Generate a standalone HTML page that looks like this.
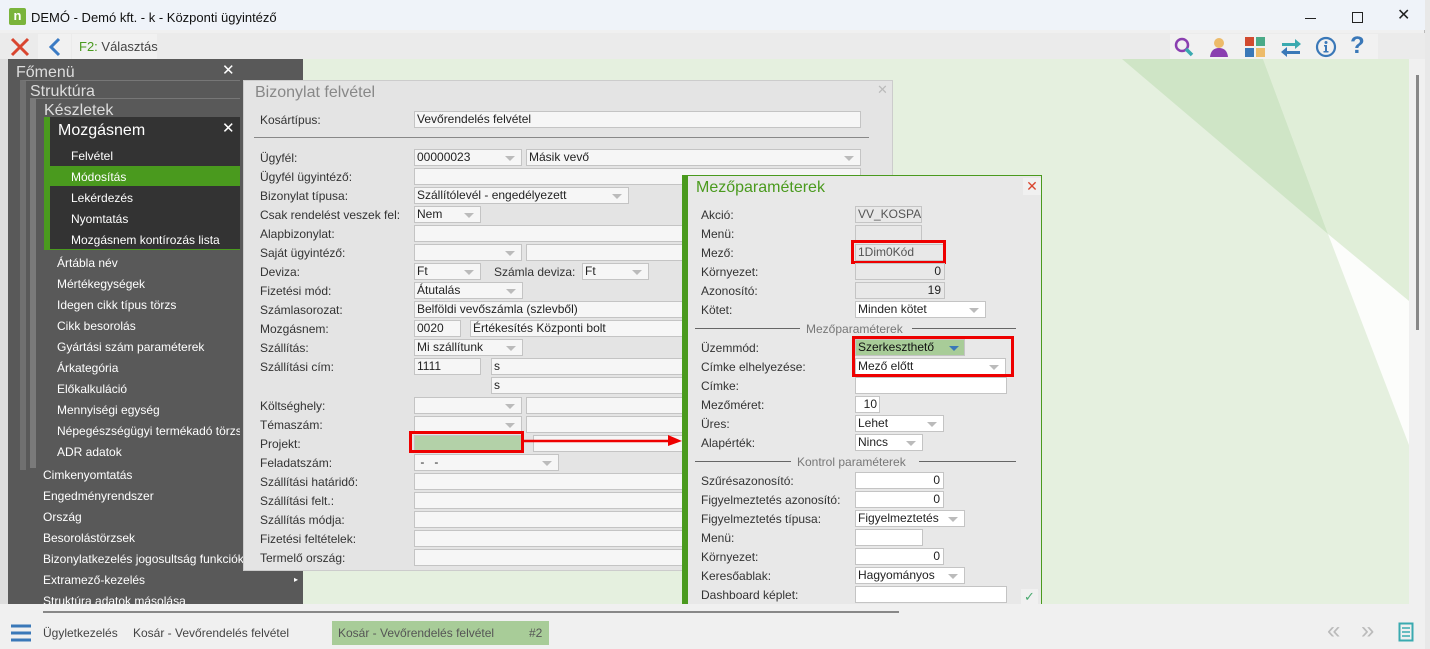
<!DOCTYPE html>
<html><head><meta charset="utf-8"><style>
*{margin:0;padding:0;box-sizing:border-box}
body{width:1430px;height:649px;overflow:hidden;background:#fff;font-family:"Liberation Sans",Arial,sans-serif;font-size:12px;position:relative}
.a{position:absolute}
.lbl{position:absolute;font-size:12px;color:#333;white-space:nowrap;line-height:14px}
.in{position:absolute;height:17px;background:#f6f6f6;border:1px solid #c4c4c4;font-size:12px;line-height:15px;padding-left:2px;color:#222;white-space:nowrap;overflow:hidden}
.dd::after{content:"";position:absolute;right:6px;top:6px;border-left:5px solid transparent;border-right:5px solid transparent;border-top:5px solid #bbb}
.mi{position:absolute;color:#fff;font-size:12px;white-space:nowrap;line-height:14px}
</style></head><body>
<div class="a" style="left:0;top:0;width:1425px;height:649px;background:#f0f0f0;border-right:1px solid #bbb"></div>
<div class="a" style="left:1425px;top:0;width:5px;height:649px;background:#e8e8e8"></div>
<div class="a" style="left:0;top:0;width:1425px;height:30px;background:#eff3f9"></div>
<div class="a" style="left:9px;top:8px;width:17px;height:17px;background:#7ab43c;border-radius:2px;color:#fff;font-weight:bold;font-size:13px;line-height:16px;text-align:center">n</div>
<div class="a" style="left:31px;top:10px;font-size:13px;color:#111">DEMÓ - Demó kft. - k - Központi ügyintéző</div>
<div class="a" style="left:1305px;top:18px;width:11px;height:1px;background:#222"></div>
<div class="a" style="left:1352px;top:12px;width:11px;height:11px;border:1px solid #222"></div>
<div class="a" style="left:1397px;top:5px;font-size:16px;color:#222">✕</div>
<div class="a" style="left:0;top:33px;width:1425px;height:26px;background:#ebebeb"></div>
<svg class="a" style="left:10px;top:37px" width="20" height="20"><path d="M2 2L18 18M18 2L2 18" stroke="#d9452f" stroke-width="3"/></svg>
<div class="a" style="left:38px;top:34px;width:33px;height:25px;background:#f1f1f1"></div>
<svg class="a" style="left:48px;top:37px" width="14" height="20"><path d="M11 2L3 10L11 18" stroke="#3b7bc4" stroke-width="3" fill="none"/></svg>
<div class="a" style="left:72px;top:34px;width:85px;height:25px;background:#f1f1f1"></div>
<div class="a" style="left:79px;top:39px;font-size:13px;color:#444"><span style="color:#4a9a1e">F2:</span> Választás</div>
<div class="a" style="left:1170px;top:34px;width:208px;height:25px;background:#f1f1f1"></div>
<svg class="a" style="left:1173px;top:36px" width="24" height="22"><circle cx="9" cy="9" r="6" stroke="#8a3fb0" stroke-width="2.5" fill="none"/><path d="M13 13L19 19" stroke="#3aaab0" stroke-width="3.5"/></svg>
<svg class="a" style="left:1208px;top:36px" width="22" height="22"><circle cx="11" cy="7" r="5" fill="#edbb6a"/><path d="M2 21Q3 12 11 12Q19 12 20 21Z" fill="#8a3fb0"/></svg>
<svg class="a" style="left:1244px;top:36px" width="22" height="22"><rect x="1" y="1" width="9" height="9" fill="#d14a2f"/><rect x="12" y="1" width="9" height="9" fill="#4aaa88"/><rect x="1" y="12" width="9" height="9" fill="#3a78b8"/><rect x="12" y="12" width="9" height="9" fill="#edbb6a"/></svg>
<svg class="a" style="left:1279px;top:36px" width="24" height="22"><path d="M3 7H16V3L22 8L16 13V10H3Z" fill="#3aaab0"/><path d="M21 15H8V11L2 16L8 21V18H21Z" fill="#3a78b8"/></svg>
<svg class="a" style="left:1315px;top:36px" width="22" height="22"><circle cx="11" cy="11" r="9" stroke="#3a78b8" stroke-width="2.2" fill="none"/><circle cx="11" cy="6.5" r="1.5" fill="#3a78b8"/><path d="M9 9H12V15H13.5V16.5H8.5V15H10V10.5H9Z" fill="#3a78b8"/></svg>
<div class="a" style="left:1350px;top:32px;font-size:24px;font-weight:bold;color:#3a78b8">?</div>
<div class="a" style="left:303px;top:59px;width:1106px;height:546px;background:#e5f0df"></div>
<svg class="a" style="left:303px;top:59px" width="1106" height="546"><polygon points="819,0 960,0 1025,175" fill="#cfe5c6"/><polygon points="960,0 1106,0 1106,242 1025,175" fill="#e0eed8"/><polygon points="1025,175 1106,242 1106,386" fill="#fcfdfb"/></svg>
<div class="a" style="left:1409px;top:59px;width:16px;height:546px;background:#f0f0f0"></div>
<div class="a" style="left:1416px;top:75px;width:3px;height:255px;background:#888"></div>
<div class="a" style="left:0;top:59px;width:8px;height:546px;background:#ddd"></div>
<div class="a" style="left:8px;top:59px;width:295px;height:546px;background:#595959"></div>
<div class="a" style="left:16px;top:64px;font-size:16px;color:#ddd">Főmenü</div>
<div class="a" style="left:222px;top:61px;font-size:15px;color:#fff">✕</div>
<div class="a" style="left:20px;top:80px;width:220px;height:390px;background:#595959;border-left:6px solid #707070;border-top:1px solid #777"></div>
<div class="a" style="left:30px;top:83px;font-size:16px;color:#ddd">Struktúra</div>
<div class="a" style="left:30px;top:98px;width:210px;height:370px;background:#595959;border-left:6px solid #7a7a7a;border-top:1px solid #777"></div>
<div class="a" style="left:44px;top:102px;font-size:16px;color:#ddd">Készletek</div>
<div class="a" style="left:44px;top:117px;width:196px;height:133px;background:#333;border-left:6px solid #4a9a1e;border-bottom:1px solid #4a9a1e"></div>
<div class="a" style="left:58px;top:122px;font-size:16px;color:#fff">Mozgásnem</div>
<div class="a" style="left:222px;top:119px;font-size:15px;color:#fff">✕</div>
<div class="a" style="left:50px;top:166px;width:190px;height:20px;background:#4a9a1e"></div>
<div class="mi" style="left:71px;top:149px">Felvétel</div>
<div class="mi" style="left:71px;top:170px">Módosítás</div>
<div class="mi" style="left:71px;top:191px">Lekérdezés</div>
<div class="mi" style="left:71px;top:212px">Nyomtatás</div>
<div class="mi" style="left:71px;top:233px">Mozgásnem kontírozás lista</div>
<div class="mi" style="left:57px;top:256px">Ártábla név</div>
<div class="mi" style="left:57px;top:277px">Mértékegységek</div>
<div class="mi" style="left:57px;top:298px">Idegen cikk típus törzs</div>
<div class="mi" style="left:57px;top:319px">Cikk besorolás</div>
<div class="mi" style="left:57px;top:340px">Gyártási szám paraméterek</div>
<div class="mi" style="left:57px;top:361px">Árkategória</div>
<div class="mi" style="left:57px;top:382px">Előkalkuláció</div>
<div class="mi" style="left:57px;top:403px">Mennyiségi egység</div>
<div class="mi" style="left:57px;top:424px;width:183px;overflow:hidden">Népegészségügyi termékadó törzs</div>
<div class="mi" style="left:57px;top:445px">ADR adatok</div>
<div class="mi" style="left:43px;top:468px">Cimkenyomtatás</div>
<div class="mi" style="left:43px;top:489px">Engedményrendszer</div>
<div class="mi" style="left:43px;top:510px">Ország</div>
<div class="mi" style="left:43px;top:531px">Besorolástörzsek</div>
<div class="mi" style="left:43px;top:552px;width:200px;overflow:hidden">Bizonylatkezelés jogosultság funkciók</div>
<div class="mi" style="left:43px;top:573px">Extramező-kezelés</div>
<div class="a" style="left:294px;top:575px;font-size:8px;color:#fff">▸</div>
<div class="mi" style="left:43px;top:594px">Struktúra adatok másolása</div>
<div class="a" style="left:243px;top:80px;width:650px;height:491px;background:#e4e4e4;border:1px solid #ccc;overflow:hidden">
<div class="a" style="left:11px;top:3px;font-size:16px;color:#888">Bizonylat felvétel</div>
<div class="a" style="left:633px;top:1px;font-size:13px;color:#bbb">✕</div>
<div class="lbl" style="left:16px;top:32px">Kosártípus:</div>
<div class="in" style="left:170px;top:30px;width:447px">Vevőrendelés felvétel</div>
<div class="a" style="left:10px;top:56px;width:615px;height:1px;background:#888"></div>
<div class="lbl" style="left:16px;top:70px">Ügyfél:</div><div class="in dd" style="left:170px;top:68px;width:108px">00000023</div><div class="in dd" style="left:282px;top:68px;width:335px">Másik vevő</div>
<div class="lbl" style="left:16px;top:89px">Ügyfél ügyintéző:</div><div class="in" style="left:170px;top:87px;width:447px"></div>
<div class="lbl" style="left:16px;top:108px">Bizonylat típusa:</div><div class="in dd" style="left:170px;top:106px;width:215px">Szállítólevél - engedélyezett</div>
<div class="lbl" style="left:16px;top:127px">Csak rendelést veszek fel:</div><div class="in dd" style="left:170px;top:125px;width:67px">Nem</div>
<div class="lbl" style="left:16px;top:146px">Alapbizonylat:</div><div class="in" style="left:170px;top:144px;width:447px"></div>
<div class="lbl" style="left:16px;top:165px">Saját ügyintéző:</div><div class="in dd" style="left:170px;top:163px;width:108px"></div><div class="in" style="left:282px;top:163px;width:335px"></div>
<div class="lbl" style="left:16px;top:184px">Deviza:</div><div class="in dd" style="left:170px;top:182px;width:67px">Ft</div><div class="lbl" style="left:250px;top:184px">Számla deviza:</div><div class="in dd" style="left:338px;top:182px;width:67px">Ft</div>
<div class="lbl" style="left:16px;top:203px">Fizetési mód:</div><div class="in dd" style="left:170px;top:201px;width:109px">Átutalás</div>
<div class="lbl" style="left:16px;top:222px">Számlasorozat:</div><div class="in" style="left:170px;top:220px;width:447px">Belföldi vevőszámla (szlevből)</div>
<div class="lbl" style="left:16px;top:241px">Mozgásnem:</div><div class="in" style="left:170px;top:239px;width:47px">0020</div><div class="in" style="left:226px;top:239px;width:391px">Értékesítés Központi bolt</div>
<div class="lbl" style="left:16px;top:260px">Szállítás:</div><div class="in dd" style="left:170px;top:258px;width:109px">Mi szállítunk</div>
<div class="lbl" style="left:16px;top:279px">Szállítási cím:</div><div class="in" style="left:170px;top:277px;width:67px">1111</div><div class="in" style="left:247px;top:277px;width:370px">s</div>
<div class="in" style="left:247px;top:296px;width:370px">s</div>
<div class="lbl" style="left:16px;top:318px">Költséghely:</div><div class="in dd" style="left:170px;top:316px;width:108px"></div><div class="in" style="left:282px;top:316px;width:335px"></div>
<div class="lbl" style="left:16px;top:337px">Témaszám:</div><div class="in dd" style="left:170px;top:335px;width:108px"></div><div class="in" style="left:282px;top:335px;width:335px"></div>
<div class="lbl" style="left:16px;top:356px">Projekt:</div><div class="in" style="left:170px;top:354px;width:108px;background:#b3d1a8"></div><div class="in" style="left:289px;top:354px;width:328px"></div>
<div class="a" style="left:165px;top:350px;width:115px;height:22px;border:3px solid #e00"></div>
<div class="lbl" style="left:16px;top:375px">Feladatszám:</div><div class="in dd" style="left:170px;top:373px;width:145px">&nbsp;-&nbsp;&nbsp;&nbsp;-</div>
<div class="lbl" style="left:16px;top:394px">Szállítási határidő:</div><div class="in" style="left:170px;top:392px;width:447px"></div>
<div class="lbl" style="left:16px;top:413px">Szállítási felt.:</div><div class="in" style="left:170px;top:411px;width:447px"></div>
<div class="lbl" style="left:16px;top:432px">Szállítás módja:</div><div class="in" style="left:170px;top:430px;width:447px"></div>
<div class="lbl" style="left:16px;top:451px">Fizetési feltételek:</div><div class="in" style="left:170px;top:449px;width:447px"></div>
<div class="lbl" style="left:16px;top:470px">Termelő ország:</div><div class="in" style="left:170px;top:468px;width:447px"></div>
</div>
<svg class="a" style="left:520px;top:432px" width="165" height="20"><path d="M3 9L150 9" stroke="#e00" stroke-width="2.5"/><polygon points="148,3 162,9 148,14" fill="#e00"/></svg>
<div class="a" style="left:682px;top:175px;width:360px;height:430px;background:#e8e8e8;border:1px solid #4a9a1e;border-left:6px solid #4a9a1e;overflow:hidden">
<div class="a" style="left:8px;top:3px;font-size:16px;color:#4a9a1e">Mezőparaméterek</div>
<div class="a" style="left:335px;top:2px;width:18px;height:17px;background:#f0f0f0;color:#d9452f;font-size:14px;text-align:center;line-height:17px">✕</div>
<div class="lbl" style="left:13px;top:32px">Akció:</div><div class="in" style="left:167px;top:30px;width:67px;background:#e8e8e8;color:#555">VV_KOSPA</div>
<div class="lbl" style="left:13px;top:51px">Menü:</div><div class="in" style="left:167px;top:49px;width:67px;background:#e8e8e8"></div>
<div class="lbl" style="left:13px;top:70px">Mező:</div><div class="in" style="left:167px;top:68px;width:90px;background:#e8e8e8;color:#555">1Dim0Kód</div>
<div class="a" style="left:163px;top:64px;width:95px;height:24px;border:3px solid #e00"></div>
<div class="lbl" style="left:13px;top:89px">Környezet:</div><div class="in" style="left:167px;top:87px;width:90px;background:#e8e8e8;text-align:right;padding-right:3px">0</div>
<div class="lbl" style="left:13px;top:108px">Azonosító:</div><div class="in" style="left:167px;top:106px;width:90px;background:#e8e8e8;text-align:right;padding-right:3px">19</div>
<div class="lbl" style="left:13px;top:127px">Kötet:</div><div class="in dd" style="left:167px;top:125px;width:131px;background:#fff">Minden kötet</div>
<div class="a" style="left:7px;top:152px;width:105px;height:1px;background:#666"></div><div class="lbl" style="left:118px;top:146px;color:#777">Mezőparaméterek</div><div class="a" style="left:224px;top:152px;width:104px;height:1px;background:#666"></div>
<div class="lbl" style="left:13px;top:165px">Üzemmód:</div><div class="in" style="left:167px;top:163px;width:110px;background:#a8cc98;color:#111">Szerkeszthető<span style="position:absolute;right:5px;top:6px;border-left:5px solid transparent;border-right:5px solid transparent;border-top:5px solid #3a78b8"></span></div>
<div class="lbl" style="left:13px;top:184px">Címke elhelyezése:</div><div class="in dd" style="left:167px;top:182px;width:151px;background:#fff">Mező előtt</div>
<div class="a" style="left:164px;top:160px;width:162px;height:41px;border:3px solid #e00"></div>
<div class="lbl" style="left:13px;top:203px">Címke:</div><div class="in" style="left:167px;top:201px;width:152px;background:#fff"></div>
<div class="lbl" style="left:13px;top:222px">Mezőméret:</div><div class="in" style="left:167px;top:220px;width:25px;background:#fff;text-align:right;padding-right:2px">10</div>
<div class="lbl" style="left:13px;top:241px">Üres:</div><div class="in dd" style="left:167px;top:239px;width:89px;background:#fff">Lehet</div>
<div class="lbl" style="left:13px;top:260px">Alapérték:</div><div class="in dd" style="left:167px;top:258px;width:68px;background:#fff">Nincs</div>
<div class="a" style="left:7px;top:285px;width:96px;height:1px;background:#666"></div><div class="lbl" style="left:109px;top:279px;color:#777">Kontrol paraméterek</div><div class="a" style="left:231px;top:285px;width:97px;height:1px;background:#666"></div>
<div class="lbl" style="left:13px;top:298px">Szűrésazonosító:</div><div class="in" style="left:167px;top:296px;width:89px;background:#fff;text-align:right;padding-right:3px">0</div>
<div class="lbl" style="left:13px;top:317px">Figyelmeztetés azonosító:</div><div class="in" style="left:167px;top:315px;width:89px;background:#fff;text-align:right;padding-right:3px">0</div>
<div class="lbl" style="left:13px;top:336px">Figyelmeztetés típusa:</div><div class="in dd" style="left:167px;top:334px;width:110px;background:#fff">Figyelmeztetés</div>
<div class="lbl" style="left:13px;top:355px">Menü:</div><div class="in" style="left:167px;top:353px;width:68px;background:#fff"></div>
<div class="lbl" style="left:13px;top:374px">Környezet:</div><div class="in" style="left:167px;top:372px;width:89px;background:#fff;text-align:right;padding-right:3px">0</div>
<div class="lbl" style="left:13px;top:393px">Keresőablak:</div><div class="in dd" style="left:167px;top:391px;width:110px;background:#fff">Hagyományos</div>
<div class="lbl" style="left:13px;top:412px">Dashboard képlet:</div><div class="in" style="left:167px;top:410px;width:152px;background:#fff"></div>
<div class="a" style="left:333px;top:413px;width:17px;height:17px;background:#f0f0f0;color:#4aaa70;font-size:13px;text-align:center">✓</div>
</div>
<div class="a" style="left:0;top:604px;width:1425px;height:45px;background:#f0f0f0"></div>
<div class="a" style="left:43px;top:611px;width:856px;height:2px;background:#888"></div>
<svg class="a" style="left:10px;top:624px" width="22" height="18"><path d="M1 2H21M1 9H21M1 16H21" stroke="#3a78b8" stroke-width="3"/></svg>
<div class="a" style="left:43px;top:626px;font-size:12px;color:#444">Ügyletkezelés</div>
<div class="a" style="left:133px;top:626px;font-size:12px;color:#444">Kosár - Vevőrendelés felvétel</div>
<div class="a" style="left:332px;top:621px;width:217px;height:24px;background:#a8cc98"></div>
<div class="a" style="left:338px;top:626px;font-size:12px;color:#555">Kosár - Vevőrendelés felvétel</div>
<div class="a" style="left:529px;top:626px;font-size:12px;color:#555">#2</div>
<div class="a" style="left:1327px;top:617px;font-size:24px;color:#bbb">«</div>
<div class="a" style="left:1361px;top:617px;font-size:24px;color:#bbb">»</div>
<svg class="a" style="left:1398px;top:622px" width="16" height="20"><rect x="1.5" y="1.5" width="13" height="17" fill="none" stroke="#3aaab0" stroke-width="2"/><path d="M4 6H12M4 10H12M4 14H12" stroke="#3aaab0" stroke-width="1.5"/></svg>
</body></html>
